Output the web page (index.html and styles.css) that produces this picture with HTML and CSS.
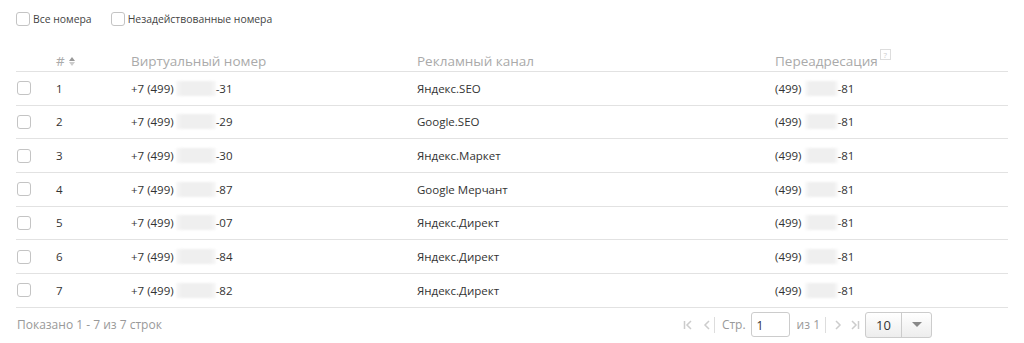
FILE: index.html
```html
<!DOCTYPE html>
<html lang="ru">
<head>
<meta charset="utf-8">
<link rel="stylesheet" href="styles.css">
</head>
<body>
<div class="page">
  <div class="filters">
    <label class="filter"><span class="cb"></span>Все номера</label>
    <label class="filter"><span class="cb"></span>Незадействованные номера</label>
  </div>
  <div class="table">
    <div class="row head">
      <div class="c-cb"></div>
      <div class="c-num">#<span class="sort"><span class="up"></span><span class="down"></span></span></div>
      <div class="c-virt">Виртуальный номер</div>
      <div class="c-chan">Рекламный канал</div>
      <div class="c-fwd">Переадресация<span class="help">?</span></div>
    </div>
    <div class="row">
      <div class="c-cb"><span class="cb"></span></div>
      <div class="c-num">1</div>
      <div class="c-virt">+7 (499) <span class="blur b1"></span>-31</div>
      <div class="c-chan">Яндекс.SEO</div>
      <div class="c-fwd">(499) <span class="blur b2"></span>-81</div>
    </div>
    <div class="row">
      <div class="c-cb"><span class="cb"></span></div>
      <div class="c-num">2</div>
      <div class="c-virt">+7 (499) <span class="blur b1"></span>-29</div>
      <div class="c-chan">Google.SEO</div>
      <div class="c-fwd">(499) <span class="blur b2"></span>-81</div>
    </div>
    <div class="row">
      <div class="c-cb"><span class="cb"></span></div>
      <div class="c-num">3</div>
      <div class="c-virt">+7 (499) <span class="blur b1"></span>-30</div>
      <div class="c-chan">Яндекс.Маркет</div>
      <div class="c-fwd">(499) <span class="blur b2"></span>-81</div>
    </div>
    <div class="row">
      <div class="c-cb"><span class="cb"></span></div>
      <div class="c-num">4</div>
      <div class="c-virt">+7 (499) <span class="blur b1"></span>-87</div>
      <div class="c-chan">Google Мерчант</div>
      <div class="c-fwd">(499) <span class="blur b2"></span>-81</div>
    </div>
    <div class="row">
      <div class="c-cb"><span class="cb"></span></div>
      <div class="c-num">5</div>
      <div class="c-virt">+7 (499) <span class="blur b1"></span>-07</div>
      <div class="c-chan">Яндекс.Директ</div>
      <div class="c-fwd">(499) <span class="blur b2"></span>-81</div>
    </div>
    <div class="row">
      <div class="c-cb"><span class="cb"></span></div>
      <div class="c-num">6</div>
      <div class="c-virt">+7 (499) <span class="blur b1"></span>-84</div>
      <div class="c-chan">Яндекс.Директ</div>
      <div class="c-fwd">(499) <span class="blur b2"></span>-81</div>
    </div>
    <div class="row">
      <div class="c-cb"><span class="cb"></span></div>
      <div class="c-num">7</div>
      <div class="c-virt">+7 (499) <span class="blur b1"></span>-82</div>
      <div class="c-chan">Яндекс.Директ</div>
      <div class="c-fwd">(499) <span class="blur b2"></span>-81</div>
    </div>
  </div>
  <div class="footer">
    <div class="info">Показано 1 - 7 из 7 строк</div>
    <div class="pager">
      <span class="pbtn first"><svg width="12" height="12" viewBox="0 0 12 12"><path d="M2.5 2v8M9 2L5 6l4 4" fill="none" stroke="#ccc" stroke-width="1.5"/></svg></span>
      <span class="pbtn prev"><svg width="12" height="12" viewBox="0 0 12 12"><path d="M8 2L4 6l4 4" fill="none" stroke="#ccc" stroke-width="1.5"/></svg></span>
      <span class="sep s1"></span>
      <span class="ptext label">Стр.</span>
      <span class="pinput">1</span>
      <span class="ptext of">из 1</span>
      <span class="sep s2"></span>
      <span class="pbtn next"><svg width="12" height="12" viewBox="0 0 12 12"><path d="M4 2l4 4-4 4" fill="none" stroke="#ccc" stroke-width="1.5"/></svg></span>
      <span class="pbtn last"><svg width="12" height="12" viewBox="0 0 12 12"><path d="M3 2l4 4-4 4M9.5 2v8" fill="none" stroke="#ccc" stroke-width="1.5"/></svg></span>
      <span class="psize"><span class="pval">10</span><span class="parrow"><svg width="10" height="6" viewBox="0 0 10 6"><path d="M0 0h10L5 5z" fill="#888"/></svg></span></span>
    </div>
  </div>
</div>
</body>
</html>
```
FILE: styles.css
```css
* { box-sizing: border-box; }
html, body { margin: 0; padding: 0; background: #fff; }
body {
  font-family: "Open Sans", "Noto Sans", sans-serif;
  color: #333;
  font-size: 11.5px;
}
.page { padding: 0 16px; }
.filters {
  display: flex;
  align-items: center;
  height: 37px;
  gap: 19px;
}
.filter {
  display: flex;
  align-items: center;
  gap: 3px;
  color: #444;
  font-size: 10.4px;
}
.cb {
  display: inline-block;
  width: 14px;
  height: 14px;
  border: 1px solid #c4c4c4;
  border-radius: 3px;
  background: #fff;
}
.row {
  display: grid;
  grid-template-columns: 40px 75px 286px 358px 1fr;
  height: 33.67px;
  align-items: center;
  border-bottom: 1px solid #e2e2e2;
}
.row.head {
  height: 35px;
  align-items: end;
  padding-bottom: 1px;
  font-size: 13.5px;
  color: #aaa;
}
.row > div { display: flex; align-items: center; }
.c-cb { padding-left: 1px; }
.sort {
  display: inline-flex;
  flex-direction: column;
  gap: 1px;
  margin-left: 4px;
}
.sort .up {
  width: 0; height: 0;
  border-left: 3px solid transparent;
  border-right: 3px solid transparent;
  border-bottom: 4px solid #999;
}
.sort .down {
  width: 0; height: 0;
  border-left: 3px solid transparent;
  border-right: 3px solid transparent;
  border-top: 4px solid #ccc;
}
.help {
  align-self: flex-start;
  display: inline-flex;
  align-items: center;
  justify-content: center;
  width: 11px;
  height: 11px;
  border: 1px solid #ddd;
  font-size: 8px;
  color: #ccc;
  margin-left: 2px;
  margin-top: -3px;
}
.blur {
  display: inline-block;
  height: 15px;
  background: linear-gradient(90deg, rgba(238,238,238,0.4), #efefef 15%, #efefef 85%, rgba(238,238,238,0.4));
  filter: blur(1px);
}
.b1 { width: 40px; margin: 0 0 0 2px; }
.b2 { width: 33px; margin: 0 0 0 3px; }
.footer {
  display: flex;
  justify-content: space-between;
  align-items: center;
  height: 34px;
}
.info { color: #999; font-size: 12px; padding-left: 1px; }
.pager {
  display: flex;
  align-items: center;
  margin-right: 76px;
  color: #999;
  font-size: 12px;
}
.pbtn { display: inline-flex; width: 12px; justify-content: center; }
.prev { margin-left: 7px; }
.sep { width: 1px; height: 16px; background: #ddd; }
.s1 { margin-left: 1px; }
.label { padding: 0 5px 0 7px; }
.of { padding: 0 5px 0 7px; }
.next { margin-left: 6px; }
.last { margin-left: 5px; }
.pinput {
  width: 39px;
  height: 25px;
  border: 1px solid #ccc;
  border-radius: 3px;
  color: #333;
  padding: 4px 5px;
  font-size: 12px;
}
.psize {
  display: flex;
  height: 26px;
  margin-left: 4px;
  border: 1px solid #ccc;
  border-radius: 3px;
  background: linear-gradient(#fff, #ededed);
}
.pval {
  width: 36px;
  color: #333;
  font-size: 13px;
  display: flex;
  align-items: center;
  padding-left: 10px;
  border-right: 1px solid #ccc;
}
.parrow { width: 29px; display: flex; align-items: center; justify-content: center; }
```
